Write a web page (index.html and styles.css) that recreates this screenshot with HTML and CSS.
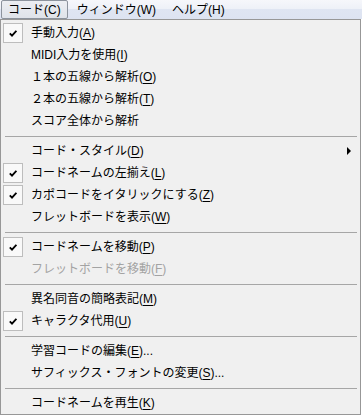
FILE: index.html
```html
<!DOCTYPE html>
<html lang="ja">
<head>
    <meta charset="UTF-8">
    <meta name="viewport" content="width=device-width, initial-scale=1.0">
    <title>コード</title>
    <link rel="stylesheet" href="styles.css">
</head>
<body>
    <div class="menubar">
        <span class="bar-item open">コード(C)</span>
        <span class="bar-item">ウィンドウ(W)</span>
        <span class="bar-item">ヘルプ(H)</span>
    </div>

    <div class="menu">
        <div class="item checked"><span class="check"><svg width="8" height="7" viewBox="0 0 8 7"><path d="M0.8 3.4 L3 5.6 L7.4 0.8" fill="none" stroke="#000" stroke-width="1.9"/></svg></span><span class="label">手動入力(<u>A</u>)</span></div>
        <div class="item"><span class="check"></span><span class="label">MIDI入力を使用(<u>I</u>)</span></div>
        <div class="item"><span class="check"></span><span class="label">１本の五線から解析(<u>O</u>)</span></div>
        <div class="item"><span class="check"></span><span class="label">２本の五線から解析(<u>T</u>)</span></div>
        <div class="item"><span class="check"></span><span class="label">スコア全体から解析</span></div>
        <div class="sep"></div>
        <div class="item"><span class="check"></span><span class="label">コード・スタイル(<u>D</u>)</span><span class="arrow"></span></div>
        <div class="item checked"><span class="check"><svg width="8" height="7" viewBox="0 0 8 7"><path d="M0.8 3.4 L3 5.6 L7.4 0.8" fill="none" stroke="#000" stroke-width="1.9"/></svg></span><span class="label">コードネームの左揃え(<u>L</u>)</span></div>
        <div class="item checked"><span class="check"><svg width="8" height="7" viewBox="0 0 8 7"><path d="M0.8 3.4 L3 5.6 L7.4 0.8" fill="none" stroke="#000" stroke-width="1.9"/></svg></span><span class="label">カポコードをイタリックにする(<u>Z</u>)</span></div>
        <div class="item"><span class="check"></span><span class="label">フレットボードを表示(<u>W</u>)</span></div>
        <div class="sep"></div>
        <div class="item checked"><span class="check"><svg width="8" height="7" viewBox="0 0 8 7"><path d="M0.8 3.4 L3 5.6 L7.4 0.8" fill="none" stroke="#000" stroke-width="1.9"/></svg></span><span class="label">コードネームを移動(<u>P</u>)</span></div>
        <div class="item disabled"><span class="check"></span><span class="label">フレットボードを移動(<u>F</u>)</span></div>
        <div class="sep"></div>
        <div class="item"><span class="check"></span><span class="label">異名同音の簡略表記(<u>M</u>)</span></div>
        <div class="item checked"><span class="check"><svg width="8" height="7" viewBox="0 0 8 7"><path d="M0.8 3.4 L3 5.6 L7.4 0.8" fill="none" stroke="#000" stroke-width="1.9"/></svg></span><span class="label">キャラクタ代用(<u>U</u>)</span></div>
        <div class="sep"></div>
        <div class="item"><span class="check"></span><span class="label">学習コードの編集(<u>E</u>)...</span></div>
        <div class="item"><span class="check"></span><span class="label">サフィックス・フォントの変更(<u>S</u>)...</span></div>
        <div class="sep"></div>
        <div class="item"><span class="check"></span><span class="label">コードネームを再生(<u>K</u>)</span></div>
    </div>
</body>
</html>
```

FILE: styles.css
```css
body {
    margin: 0;
    padding: 0;
    background: #fff;
    font-family: "Liberation Sans", "Noto Sans CJK JP", sans-serif;
    font-size: 12px;
    color: #000;
    overflow: hidden;
}
.menubar {
    display: flex;
    align-items: center;
    gap: 2px;
    height: 19px;
    padding-left: 1px;
    background: linear-gradient(#f6f7fb, #eef1f8 45%, #dfe5f2 50%, #dde3f1);
}
.bar-item {
    height: 17px;
    line-height: 18px;
    padding: 0 6px;
    border: 1px solid transparent;
    border-radius: 2px;
    white-space: nowrap;
}
.bar-item.open {
    border-color: #8c939d;
    background: linear-gradient(#eceef2, #dfe3ea);
}
.menu {
    width: 355px;
    border: 1px solid #979797;
    padding: 2px 2px 0 2px;
    background: #f0f0f0;
}
.item {
    display: flex;
    align-items: center;
    height: 22px;
    white-space: nowrap;
}
.check {
    flex: none;
    width: 20px;
    height: 20px;
    box-sizing: border-box;
    display: flex;
    align-items: center;
    justify-content: center;
}
.checked .check {
    border: 1px solid #bdbdbd;
    background: #f9f9f9;
}
.check svg {
    display: block;
    margin-left: -1px;
}
.label {
    margin-left: 8px;
    line-height: 22px;
}
.label u {
    text-underline-offset: 2px;
}
.disabled .label {
    color: #a3a3a3;
}
.arrow {
    margin-left: auto;
    margin-right: 7px;
    width: 0;
    height: 0;
    border-left: 4px solid #000;
    border-top: 4px solid transparent;
    border-bottom: 4px solid transparent;
}
.sep {
    height: 1px;
    margin: 4px 1px 3px 2px;
    background: #a6a6a6;
}
```
